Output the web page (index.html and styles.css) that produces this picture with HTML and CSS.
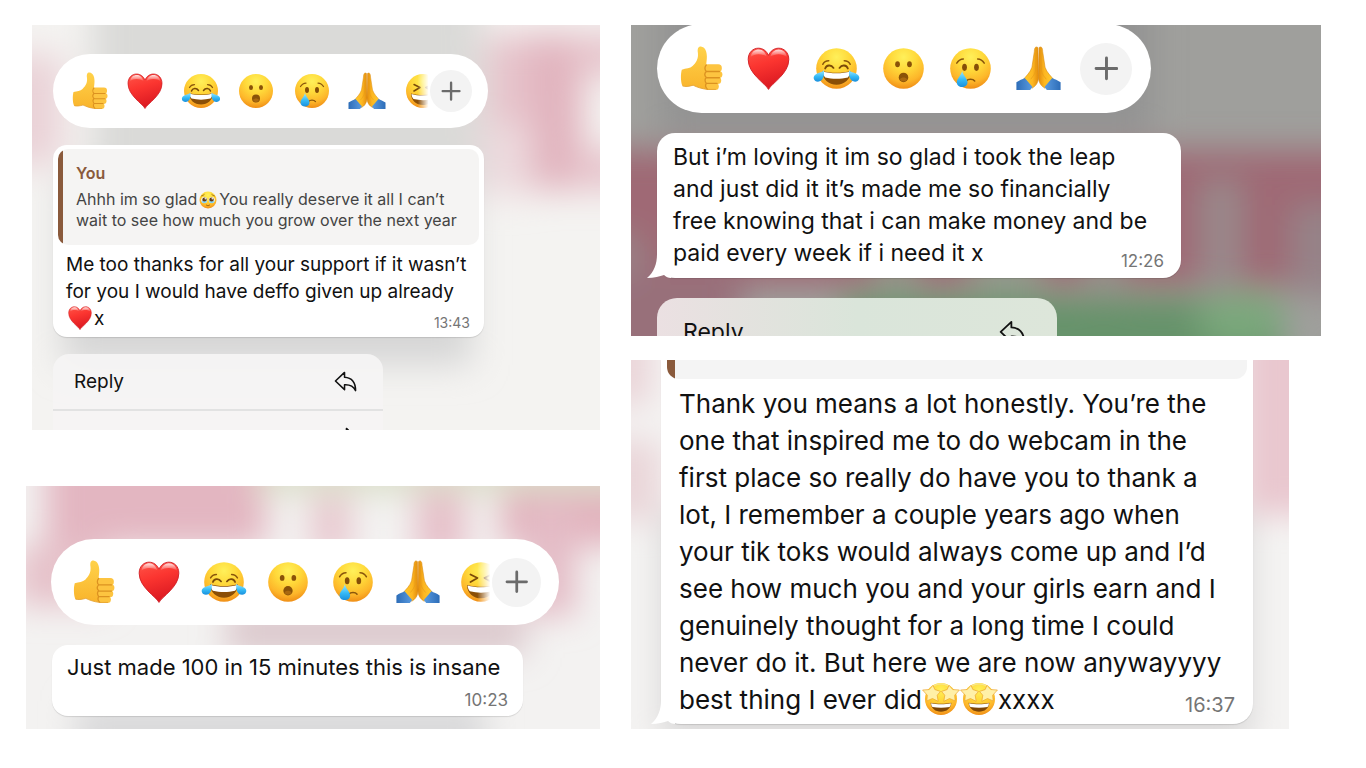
FILE: index.html
```
<!DOCTYPE html>
<html lang="en">
<head>
    <meta charset="UTF-8">
    <meta name="viewport" content="width=device-width, initial-scale=1.0">
    <title>Messages</title>
    <link rel="stylesheet" href="styles.css">
</head>
<body>
    <!-- Shared emoji and icons -->
    <svg class="sprite" width="0" height="0" aria-hidden="true">
        <defs>
            <radialGradient id="face" cx="0.5" cy="0.22" r="0.8">
                <stop offset="0" stop-color="#fff05a"/>
                <stop offset="0.4" stop-color="#ffd93a"/>
                <stop offset="0.75" stop-color="#fdb62a"/>
                <stop offset="1" stop-color="#ee8a14"/>
            </radialGradient>
            <linearGradient id="red" x1="0" y1="0" x2="0.3" y2="1">
                <stop offset="0" stop-color="#ff5548"/>
                <stop offset="0.45" stop-color="#fb3530"/>
                <stop offset="1" stop-color="#dc1a22"/>
            </linearGradient>
            <linearGradient id="shine" x1="0" y1="0" x2="0" y2="1">
                <stop offset="0" stop-color="#fff" stop-opacity="0.85"/>
                <stop offset="1" stop-color="#fff" stop-opacity="0"/>
            </linearGradient>
            <linearGradient id="tear" x1="0" y1="0" x2="0" y2="1">
                <stop offset="0" stop-color="#9fe8ff"/>
                <stop offset="0.55" stop-color="#35baf6"/>
                <stop offset="1" stop-color="#1a8fdc"/>
            </linearGradient>
            <linearGradient id="skin" x1="0" y1="0" x2="0" y2="1">
                <stop offset="0" stop-color="#ffd24a"/>
                <stop offset="1" stop-color="#f9b42c"/>
            </linearGradient>
            <linearGradient id="palm" x1="0" y1="0" x2="1" y2="0">
                <stop offset="0" stop-color="#ffcb2e"/>
                <stop offset="0.6" stop-color="#fdb721"/>
                <stop offset="1" stop-color="#e38b0c"/>
            </linearGradient>
            <linearGradient id="sleeve" x1="0" y1="0" x2="1" y2="0">
                <stop offset="0" stop-color="#2d6db8"/>
                <stop offset="1" stop-color="#5a9be0"/>
            </linearGradient>
        </defs>

        <symbol id="thumb" viewBox="0 0 72 72" overflow="visible">
            <path fill="url(#skin)" d="M3 38C10 36 17 36 21 32 27 26 31 20 30 10 29 3 30-1 35-1 42 0 45 7 45 16 45 22 44 26 44 30L60 30 60 70 46 71C36 70 28 67 22 64 15 66 8 67 4 65 1 58 1 45 3 38Z"/>
            <g fill="#fdc440">
                <rect x="41" y="29" width="29" height="13" rx="6"/>
                <rect x="42" y="40" width="29" height="12" rx="6"/>
                <rect x="42" y="50" width="27" height="12" rx="6"/>
                <rect x="43" y="60" width="22" height="12" rx="6"/>
            </g>
            <path fill="none" stroke="#dc9220" stroke-width="2.200" stroke-linecap="round" d="M44 41H66M44 51.500H66M44 61H62M44 30C41 33 41 38 44 41 41 44 41 48 44 51 41 54 42 58 44 61 42 64 43 68 46 71"/>
            <path fill="none" stroke="#e5a233" stroke-width="1.500" d="M4 65C8 67 15 66 22 64 28 67 36 70 46 71L60 71"/>
        </symbol>

        <symbol id="heart" viewBox="0 0 72 72" overflow="visible">
            <path fill="url(#red)" stroke="#cf1b22" stroke-width="1.500" d="M36 71C31 61 2 45 2 21 2 9 10 2 19 2 27 2 33 7 36 14 39 7 45 2 53 2 62 2 70 9 70 21 70 45 41 61 36 71Z"/>
            <path fill="url(#shine)" d="M6 17C7 8 13 4 20 4 26 4 31 9 33 16 25 11 13 10 6 17ZM39 16C41 9 46 4 53 4 60 4 66 9 67 17 59 10 47 11 39 16Z"/>
        </symbol>

        <symbol id="joy" viewBox="0 0 72 72" overflow="visible">
            <circle cx="36" cy="36" r="34" fill="url(#face)"/>
            <path fill="none" stroke="#7b4a08" stroke-width="3" stroke-linecap="round" d="M17 36C19 30 27 29 31 35M41 35C45 29 53 30 55 36"/>
            <path fill="none" stroke="#8a560c" stroke-width="2.500" stroke-linecap="round" d="M13 29C15 25 18 23 23 23M49 23C54 23 57 25 59 29"/>
            <path fill="#8a4e06" d="M12 40C26 44 46 44 60 40 60 54 49 63 36 63 23 63 12 54 12 40Z"/>
            <path fill="#fff" d="M13 41C26 45 46 45 59 41 59 45 57 49 55 51 43 54 29 54 17 51 15 49 13 45 13 41Z"/>
            <path fill="url(#tear)" d="M15 39C16 49 13 58 5 58-2 58-5 50 1 46 5 43 11 43 15 39ZM57 39C56 49 59 58 67 58 74 58 77 50 71 46 67 43 61 43 57 39Z"/>
        </symbol>

        <symbol id="wow" viewBox="0 0 72 72" overflow="visible">
            <circle cx="36" cy="36" r="34" fill="url(#face)"/>
            <ellipse cx="26" cy="29" rx="4" ry="5" fill="#8a5208"/>
            <ellipse cx="46" cy="29" rx="4" ry="5" fill="#8a5208"/>
            <ellipse cx="36" cy="51" rx="8" ry="8" fill="#8a5208"/>
            <path fill="#a96810" d="M30 54C32 50 40 50 42 54 40 59 32 59 30 54Z"/>
        </symbol>

        <symbol id="cry" viewBox="0 0 72 72" overflow="visible">
            <circle cx="36" cy="36" r="34" fill="url(#face)"/>
            <ellipse cx="26" cy="34" rx="4" ry="6" fill="#854e08"/>
            <ellipse cx="46" cy="34" rx="4" ry="6" fill="#854e08"/>
            <path fill="none" stroke="#8a560c" stroke-width="2.500" stroke-linecap="round" d="M13 27C16 22 19 20 24 20M48 20C53 20 56 22 59 27M29 57C32 53 40 53 43 57"/>
            <path fill="url(#tear)" d="M22 40C24 48 31 53 31 59 31 64 27 67 22 67 17 67 13 64 13 59 13 53 20 48 22 40Z"/>
        </symbol>

        <symbol id="pray" viewBox="0 0 72 72" overflow="visible">
            <path fill="url(#palm)" stroke="#d98a12" d="M35 1C31-2 29 2 29 8L25 34C22 43 15 49 11 54L25 69C31 66 36 60 36 50Z"/>
            <path fill="none" stroke="#e39a18" d="M32 5L31 40C30 46 26 50 23 54"/>
            <path fill="url(#sleeve)" d="M-1 59C4 56 9 54 13 52L26 67 22 72H-1Z"/>
            <g transform="matrix(-1 0 0 1 72 0)">
                <path fill="url(#palm)" stroke="#d98a12" d="M35 1C31-2 29 2 29 8L25 34C22 43 15 49 11 54L25 69C31 66 36 60 36 50Z"/>
                <path fill="none" stroke="#e39a18" d="M32 5L31 40C30 46 26 50 23 54"/>
                <path fill="url(#sleeve)" d="M-1 59C4 56 9 54 13 52L26 67 22 72H-1Z"/>
            </g>
        </symbol>

        <symbol id="laugh" viewBox="0 0 72 72" overflow="visible">
            <circle cx="36" cy="36" r="34" fill="url(#face)"/>
            <path fill="none" stroke="#7b4a08" stroke-width="3" stroke-linecap="round" stroke-linejoin="round" d="M18 23L30 29 18 36M54 23L42 29 54 36"/>
            <path fill="#8a4e06" d="M12 41C26 45 46 45 60 41 60 55 49 64 36 64 23 64 12 55 12 41Z"/>
            <path fill="#fff" d="M13 42C26 46 46 46 59 42 59 46 57 50 55 52 43 55 29 55 17 52 15 50 13 46 13 42Z"/>
        </symbol>

        <symbol id="touched" viewBox="0 0 72 72" overflow="visible">
            <circle cx="36" cy="36" r="34" fill="url(#face)"/>
            <circle cx="21" cy="36" r="12" fill="#fff"/>
            <circle cx="51" cy="36" r="12" fill="#fff"/>
            <circle cx="22" cy="35" r="9" fill="#5d3a18"/>
            <circle cx="50" cy="35" r="9" fill="#5d3a18"/>
            <path fill="#7ed3fa" d="M10 39C15 43 27 43 32 39 31 46 27 49 21 49 15 49 11 46 10 39ZM40 39C45 43 57 43 62 39 61 46 57 49 51 49 45 49 41 46 40 39Z"/>
            <circle cx="25" cy="31" r="3" fill="#fff"/>
            <circle cx="53" cy="31" r="3" fill="#fff"/>
            <path fill="none" stroke="#8a560c" stroke-width="3" stroke-linecap="round" d="M10 20C14 19 18 17 21 14M51 14C54 17 58 19 62 20M29 56C33 60 39 60 43 56"/>
        </symbol>

        <symbol id="starry" viewBox="0 0 72 72" overflow="visible">
            <circle cx="36" cy="36" r="34" fill="url(#face)"/>
            <path fill="none" stroke="#f9e58a" stroke-width="3" d="M20 8C30 3 42 3 52 8"/>
            <path fill="#7d4607" d="M14 44C27 47 45 47 58 44 57 56 48 63 36 63 24 63 15 56 14 44Z"/>
            <path fill="#fff" d="M15 45C27 48 45 48 57 45 57 48 56 51 54 53 43 55 29 55 18 53 16 51 15 48 15 45Z"/>
            <path fill="#fff0a8" stroke="#eda52c" stroke-width="1.500" stroke-linejoin="round" d="M19 7L23 16 35 20 28 28 30 41 18 35 6 40 7 28-3 17 11 16Z"/>
            <path fill="#fff0a8" stroke="#eda52c" stroke-width="1.500" stroke-linejoin="round" d="M53 7L49 16 37 20 44 28 42 41 54 35 66 40 65 28 75 17 61 16Z"/>
        </symbol>

        <symbol id="reply" viewBox="0 0 24 24">
            <path fill="none" stroke="currentColor" stroke-width="1.600" stroke-linejoin="round" d="M11 2.500L1.500 11.500 11 20.500V15.500C16 15.200 20 16.500 22.500 21.500 22.500 13.500 19 8 11 7.500Z"/>
        </symbol>
        <symbol id="plus" viewBox="0 0 24 24">
            <path fill="none" stroke="currentColor" stroke-width="2.800" stroke-linecap="round" d="M12 2V22M2 12H22"/>
        </symbol>
        <symbol id="tail" viewBox="0 0 24 24">
            <path fill="#fff" d="M10 0C10 10 7 18 0 24 7 24 13 22 17 21 19 23 21 24 24 24V0Z"/>
        </symbol>
    </svg>

    <main class="board">
        <div class="column">
            <section class="shot shot-support">
                <svg class="backdrop" viewBox="0 0 568 405" preserveAspectRatio="none" aria-hidden="true">
                    <defs><filter id="blurA" x="-50%" y="-50%" width="200%" height="200%"><feGaussianBlur stdDeviation="17"/></filter></defs>
                    <rect width="568" height="405" fill="#f4f3f1"/>
                    <g filter="url(#blurA)">
                        <rect x="60" y="-60" width="390" height="220" fill="#dadad8"/>
                        <rect x="-40" y="30" width="70" height="110" fill="#ead2d7"/>
                        <rect x="455" y="10" width="60" height="110" fill="#e6c2ca"/>
                        <rect x="500" y="10" width="50" height="155" fill="#e1b2bd"/>
                        <rect x="540" y="10" width="80" height="40" fill="#e6c2ca"/>
                        <rect x="540" y="125" width="80" height="40" fill="#e6c2ca"/>
                        <rect x="450" y="100" width="50" height="70" fill="#eddade"/>
                        <rect x="30" y="150" width="410" height="190" fill="#d6d6d6"/>
                    </g>
                </svg>
                <div class="reactions">
                    <div class="emoji-row">
                        <button class="emoji" aria-label="Thumbs up"><svg><use href="#thumb"/></svg></button>
                        <button class="emoji" aria-label="Heart"><svg><use href="#heart"/></svg></button>
                        <button class="emoji" aria-label="Tears of joy"><svg><use href="#joy"/></svg></button>
                        <button class="emoji" aria-label="Surprised"><svg><use href="#wow"/></svg></button>
                        <button class="emoji" aria-label="Crying"><svg><use href="#cry"/></svg></button>
                        <button class="emoji" aria-label="Folded hands"><svg><use href="#pray"/></svg></button>
                        <button class="emoji peek" aria-label="Laughing"><svg><use href="#laugh"/></svg></button>
                    </div>
                    <button class="more" aria-label="More reactions"><svg><use href="#plus"/></svg></button>
                </div>
                <article class="bubble">
                    <blockquote class="quote">
                        <strong>You</strong>
                        <p>Ahhh im so glad<svg class="inline-emoji"><use href="#touched"/></svg>You really deserve it all I can’t<br>wait to see how much you grow over the next year</p>
                    </blockquote>
                    <p class="text">Me too thanks for all your support if it wasn’t<br>for you I would have deffo given up already<br><svg class="inline-emoji"><use href="#heart"/></svg>x</p>
                    <time>13:43</time>
                </article>
                <div class="menu">
                    <button class="menu-item">Reply<svg><use href="#reply"/></svg></button>
                    <button class="menu-item flip">Forward<svg><use href="#reply"/></svg></button>
                </div>
            </section>

            <section class="shot shot-insane">
                <svg class="backdrop" viewBox="0 0 574 243" preserveAspectRatio="none" aria-hidden="true">
                    <defs><filter id="blurC" x="-50%" y="-50%" width="200%" height="200%"><feGaussianBlur stdDeviation="16"/></filter></defs>
                    <rect width="574" height="243" fill="#f3f2f1"/>
                    <g filter="url(#blurC)">
                        <rect x="20" y="-60" width="220" height="120" fill="#e3b6c1"/>
                        <rect x="-10" y="60" width="90" height="60" fill="#e6c2ca"/>
                        <rect x="230" y="-50" width="400" height="58" fill="#dbdfcb"/>
                        <rect x="285" y="10" width="40" height="60" fill="#e8c8cf"/>
                        <rect x="390" y="5" width="50" height="70" fill="#e6c0c9"/>
                        <rect x="475" y="5" width="140" height="55" fill="#e2b2bd"/>
                        <rect x="500" y="20" width="50" height="110" fill="#e4bcc6"/>
                        <rect x="200" y="120" width="300" height="50" fill="#dcc9cd"/>
                        <rect x="50" y="215" width="410" height="80" fill="#dadadb"/>
                    </g>
                </svg>
                <div class="reactions">
                    <div class="emoji-row">
                        <button class="emoji" aria-label="Thumbs up"><svg><use href="#thumb"/></svg></button>
                        <button class="emoji" aria-label="Heart"><svg><use href="#heart"/></svg></button>
                        <button class="emoji" aria-label="Tears of joy"><svg><use href="#joy"/></svg></button>
                        <button class="emoji" aria-label="Surprised"><svg><use href="#wow"/></svg></button>
                        <button class="emoji" aria-label="Crying"><svg><use href="#cry"/></svg></button>
                        <button class="emoji" aria-label="Folded hands"><svg><use href="#pray"/></svg></button>
                        <button class="emoji peek" aria-label="Laughing"><svg><use href="#laugh"/></svg></button>
                    </div>
                    <button class="more" aria-label="More reactions"><svg><use href="#plus"/></svg></button>
                </div>
                <article class="bubble">
                    <p class="text">Just made 100 in 15 minutes this is insane</p>
                    <time>10:23</time>
                </article>
            </section>
        </div>

        <div class="column">
            <section class="shot shot-loving">
                <svg class="backdrop" viewBox="0 0 690 311" preserveAspectRatio="none" aria-hidden="true">
                    <defs><filter id="blurB" x="-50%" y="-50%" width="200%" height="200%"><feGaussianBlur stdDeviation="16"/></filter></defs>
                    <rect width="690" height="311" fill="#9f9f9c"/>
                    <g filter="url(#blurB)">
                        <rect x="30" y="-60" width="490" height="170" fill="#939393"/>
                        <rect x="-60" y="125" width="820" height="135" fill="#9f6975"/>
                        <rect x="-60" y="240" width="170" height="120" fill="#98707a"/>
                        <rect x="-60" y="210" width="70" height="40" fill="#998588"/>
                        <rect x="245" y="235" width="40" height="50" fill="#949b8e"/>
                        <rect x="340" y="230" width="70" height="60" fill="#949b8e"/>
                        <rect x="455" y="230" width="35" height="50" fill="#98948f"/>
                        <rect x="570" y="155" width="40" height="110" fill="#998a8c"/>
                        <rect x="660" y="180" width="80" height="90" fill="#968388"/>
                        <rect x="210" y="272" width="440" height="90" fill="#66936a"/>
                        <ellipse cx="610" cy="295" rx="45" ry="28" fill="#7aa87b"/>
                    </g>
                </svg>
                <div class="reactions">
                    <div class="emoji-row">
                        <button class="emoji" aria-label="Thumbs up"><svg><use href="#thumb"/></svg></button>
                        <button class="emoji" aria-label="Heart"><svg><use href="#heart"/></svg></button>
                        <button class="emoji" aria-label="Tears of joy"><svg><use href="#joy"/></svg></button>
                        <button class="emoji" aria-label="Surprised"><svg><use href="#wow"/></svg></button>
                        <button class="emoji" aria-label="Crying"><svg><use href="#cry"/></svg></button>
                        <button class="emoji" aria-label="Folded hands"><svg><use href="#pray"/></svg></button>
                    </div>
                    <button class="more" aria-label="More reactions"><svg><use href="#plus"/></svg></button>
                </div>
                <article class="bubble">
                    <svg class="tail"><use href="#tail"/></svg>
                    <p class="text">But i’m loving it im so glad i took the leap<br>and just did it it’s made me so financially<br>free knowing that i can make money and be<br>paid every week if i need it x</p>
                    <time>12:26</time>
                </article>
                <div class="menu">
                    <button class="menu-item">Reply<svg><use href="#reply"/></svg></button>
                </div>
            </section>

            <section class="shot shot-thanks">
                <svg class="backdrop" viewBox="0 0 658 369" preserveAspectRatio="none" aria-hidden="true">
                    <defs><filter id="blurD" x="-50%" y="-50%" width="200%" height="200%"><feGaussianBlur stdDeviation="16"/></filter></defs>
                    <rect width="658" height="369" fill="#f4f3f2"/>
                    <g filter="url(#blurD)">
                        <rect x="-30" y="-60" width="50" height="105" fill="#ead4d8"/>
                        <rect x="-30" y="80" width="60" height="80" fill="#ead6d9"/>
                        <rect x="610" y="-60" width="110" height="215" fill="#e9c7cf"/>
                        <rect x="30" y="150" width="590" height="230" fill="#d9d8d8"/>
                    </g>
                </svg>
                <article class="bubble">
                    <svg class="tail"><use href="#tail"/></svg>
                    <blockquote class="quote"></blockquote>
                    <p class="text">Thank you means a lot honestly. You’re the<br>one that inspired me to do webcam in the<br>first place so really do have you to thank a<br>lot, I remember a couple years ago when<br>your tik toks would always come up and I’d<br>see how much you and your girls earn and I<br>genuinely thought for a long time I could<br>never do it. But here we are now anywayyyy<br>best thing I ever did<svg class="inline-emoji"><use href="#starry"/></svg><svg class="inline-emoji"><use href="#starry"/></svg>xxxx</p>
                    <time>16:37</time>
                </article>
            </section>
        </div>
    </main>
</body>
</html>
```
FILE: styles.css
```
* {
    box-sizing: border-box;
}

body {
    margin: 0;
    background-color: #fff;
    color: #111;
    font-family: Inter, "Liberation Sans", sans-serif;
}

p, blockquote {
    margin: 0;
}

button {
    padding: 0;
    border: none;
    background: none;
    color: inherit;
    font: inherit;
    cursor: pointer;
}

.sprite {
    position: absolute;
}

.board {
    display: grid;
    grid-template-columns: 574fr 690fr;
    gap: 31px;
    align-items: start;
    padding: 25px 45px 24px 26px;
}

.column {
    display: flex;
    flex-direction: column;
}

/* Each shot is a cropped piece of a chat */
.shot {
    position: relative;
    overflow: hidden;
}

.backdrop {
    position: absolute;
    inset: 0;
    z-index: -1;
    width: 100%;
    height: 100%;
}

.shot-support {
    --emoji: 36px;
    --more: 42px;
    height: 405px;
    margin-left: 6px;
    padding: 29px 116px 0 21px;
}

.shot-insane {
    --emoji: 42px;
    --more: 49px;
    margin-top: 56px;
    padding: 53px 41px 13px 25px;
}

.shot-loving {
    --emoji: 43px;
    --more: 52px;
    height: 311px;
    padding: 0 140px 0 26px;
}

.shot-thanks {
    margin-top: 24px;
    margin-right: 32px;
    padding: 0 36px 5px 30px;
}

/* Reactions */
.reactions {
    display: flex;
    align-items: center;
    height: 74px;
    padding: 0 16px 0 9px;
    border-radius: 45px;
    background-color: #fff;
}

.shot-support .reactions {
    margin-right: -4px;
}

.shot-insane .reactions {
    height: 86px;
    padding: 0 18px 0 11px;
}

.shot-loving .reactions {
    height: 89px;
    padding: 0 19px 0 11px;
    margin: -1px 30px 0 0;
}

.emoji-row {
    display: flex;
    flex: 1;
    min-width: 0;
}

.shot-loving .emoji-row {
    margin-right: 8px;
}

.emoji {
    display: flex;
    flex: 1 0 0;
    justify-content: center;
}

.emoji svg {
    flex: none;
    width: var(--emoji);
    height: var(--emoji);
    overflow: visible;
}

.peek {
    flex: 0 0 35px;
    justify-content: flex-start;
    padding-left: 10px;
    overflow: hidden;
    -webkit-mask-image: linear-gradient(to right, #000 65%, transparent 96%);
    mask-image: linear-gradient(to right, #000 65%, transparent 96%);
}

.shot-insane .peek {
    flex-basis: 42px;
}

.more {
    display: flex;
    align-items: center;
    justify-content: center;
    width: var(--more);
    height: var(--more);
    border-radius: 50%;
    background-color: #f3f3f3;
    color: #6b6b6b;
}

.more svg {
    width: 48%;
    height: 48%;
}

/* Message bubbles */
.bubble {
    position: relative;
    border-radius: 14px;
    background-color: #fff;
    box-shadow: 0 1px 1px rgba(0, 0, 0, 0.12);
}

.shot-support .bubble {
    margin-top: 17px;
    padding: 4px 5px 5px;
    font-size: 19px;
    line-height: 27px;
}

.shot-insane .bubble {
    margin: 20px 36px 0 1px;
    padding: 7px 15px 34px;
    font-size: 22px;
    line-height: 30px;
    border-radius: 16px;
}

.shot-loving .bubble {
    margin-top: 20px;
    padding: 8px 16px 9px;
    border-radius: 18px;
    font-size: 23px;
    line-height: 32px;
}

.shot-thanks .bubble {
    padding: 0 6px 6px;
    border-radius: 0 0 20px 20px;
    font-size: 26px;
    line-height: 37px;
}

.shot-support .text {
    padding: 6px 8px 0;
}

.shot-thanks .text {
    padding: 6px 12px 0;
}

.text {
    white-space: nowrap;
}

time {
    position: absolute;
    right: 14px;
    bottom: 6px;
    color: #757575;
    font-size: 14px;
    line-height: 16px;
}

.shot-insane time {
    right: 15px;
    bottom: 8px;
    font-size: 17px;
}

.shot-loving time {
    right: 17px;
    bottom: 9px;
    font-size: 17px;
}

.shot-thanks time {
    right: 18px;
    bottom: 11px;
    font-size: 20px;
}

.tail {
    position: absolute;
    bottom: 0;
    left: -10px;
    width: 24px;
    height: 24px;
}

.quote {
    padding: 14px 13px 14px 18px;
    border-radius: 10px;
    background: linear-gradient(to right, #8a5a3c 5px, #f5f4f3 5px);
    color: #444;
    font-size: 16px;
    line-height: 21px;
}

.quote strong {
    display: block;
    margin-bottom: 5px;
    color: #8a5a3c;
    font-size: 16px;
    font-weight: 600;
}

.quote p {
    white-space: nowrap;
}

.shot-thanks .quote {
    height: 19px;
    padding: 0;
    border-radius: 0 0 12px 12px;
    background: linear-gradient(to right, #8a5a3c 8px, #f4f4f4 8px);
}

.inline-emoji {
    width: 24px;
    height: 24px;
    margin: -4px 2px;
    vertical-align: -1px;
    overflow: visible;
}

.quote .inline-emoji {
    width: 18px;
    height: 18px;
    vertical-align: 0;
}

.shot-thanks .inline-emoji {
    width: 34px;
    height: 34px;
    vertical-align: -3px;
}

/* Context menu */
.menu {
    margin: 17px 101px 0 0;
    border-radius: 16px;
    background-color: rgba(245, 244, 244, 0.92);
    overflow: hidden;
}

.menu-item {
    display: flex;
    align-items: center;
    justify-content: space-between;
    width: 100%;
    height: 55px;
    padding: 0 26px 0 21px;
    font-size: 19px;
}

.menu-item + .menu-item {
    height: 54px;
    border-top: 2px solid #e2e2e2;
}

.menu-item svg {
    width: 23px;
    height: 23px;
}

.flip svg {
    transform: scaleX(-1);
}

.shot-loving .menu {
    margin: 20px 124px 0 0;
    border-radius: 20px;
    background: linear-gradient(to right, #ebe0e2, #dae5da 50%, #dde6da);
}

.shot-loving .menu-item {
    height: 68px;
    padding: 0 31px 0 26px;
    font-size: 23px;
}

.shot-loving .menu-item svg {
    width: 27px;
    height: 27px;
}
```
